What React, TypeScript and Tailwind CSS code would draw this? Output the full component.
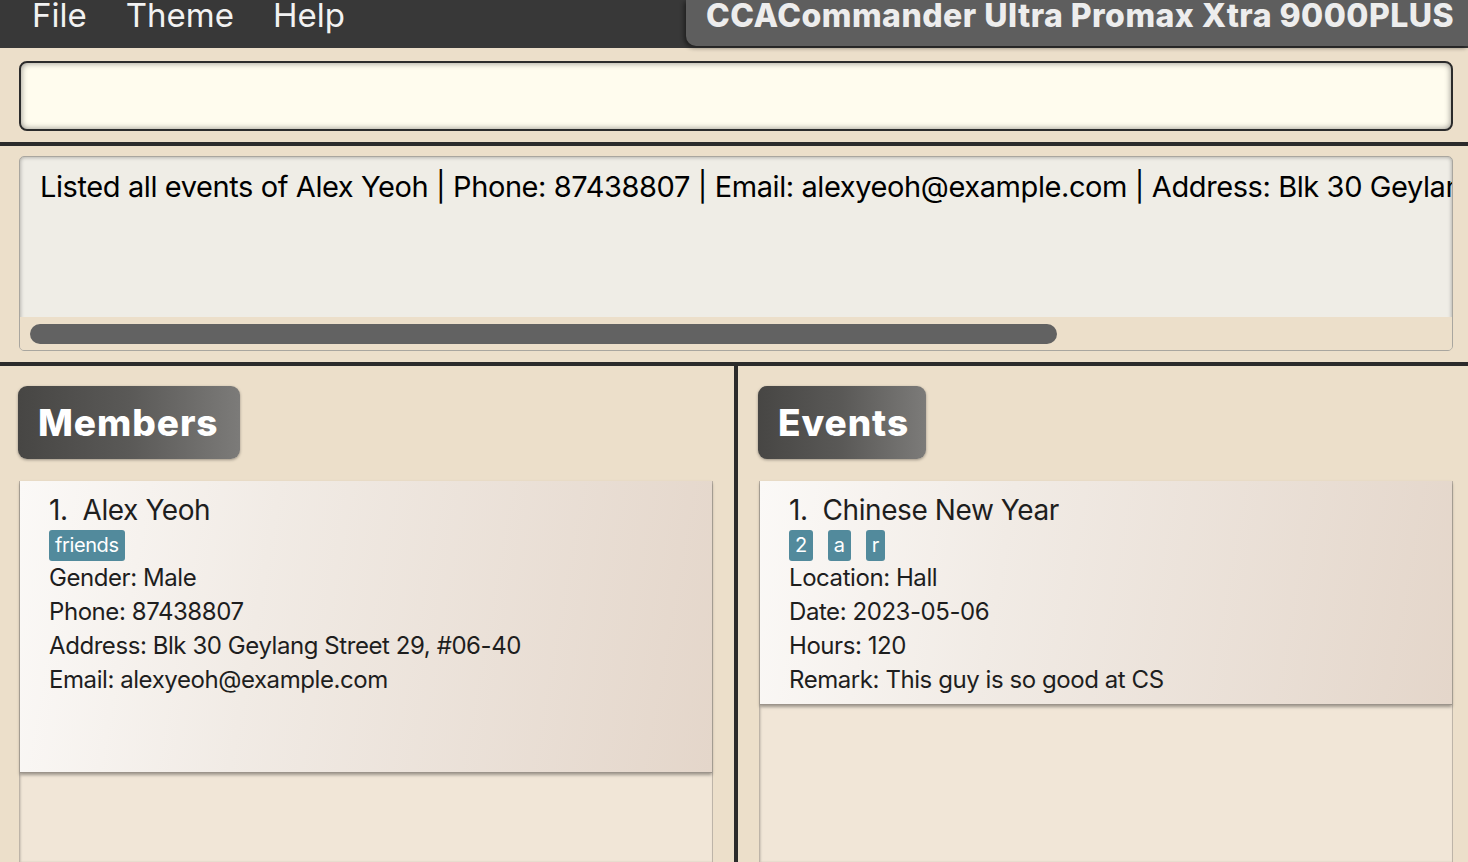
import React from "react";

const body = { fontFamily: "Inter, 'Noto Sans', sans-serif" };
const heavy = { fontFamily: "Inter, 'Open Sans', sans-serif" };

function Badge({ label, w }: { label: string; w: string }) {
  return (
    <div
      className={`h-[73px] ${w} rounded-[9px] bg-gradient-to-r from-[#474644] via-[#5a5957] to-[#7c7b79] shadow-[0_1px_3px_rgba(0,0,0,0.35)] flex items-center pl-[20px]`}
    >
      <span className="text-white text-[37px] font-extrabold tracking-[0.025em] leading-none" style={heavy}>
        {label}
      </span>
    </div>
  );
}

function Tag({ t }: { t: string }) {
  return (
    <span className="h-[31px] px-[6px] rounded-[3px] bg-[#528a9c] text-white text-[20px] leading-[31px] tracking-[-0.02em]">
      {t}
    </span>
  );
}

export default function App() {
  return (
    <div className="w-[1468px] h-[862px] overflow-hidden bg-[#ecdfca] flex flex-col" style={body}>
      {/* menu bar */}
      <div className="h-[48px] shrink-0 bg-[#383838] flex items-start">
        <div className="flex gap-[39px] pl-[32px] -mt-[9px] text-[33px] text-[#f2f2f2] font-normal leading-[48px]">
          <span>File</span>
          <span>Theme</span>
          <span>Help</span>
        </div>
        <div className="ml-auto w-[782px] h-[46px] bg-[#5e5e5e] rounded-bl-[10px] shadow-[-2px_2px_4px_rgba(0,0,0,0.45)] flex items-start pl-[20px]">
          <span className="-mt-[7px] text-[32px] font-extrabold text-[#ededed] leading-[46px] tracking-[0.015em]" style={heavy}>
            CCACommander Ultra Promax Xtra 9000PLUS
          </span>
        </div>
      </div>

      {/* command box */}
      <div className="h-[94px] shrink-0 pt-[13px] pl-[19px] pr-[15px]">
        <div className="h-[70px] rounded-[8px] border-2 border-[#2b2b2b] bg-[#fffcee] shadow-[inset_0_0_6px_rgba(0,0,0,0.45)]" />
      </div>
      <div className="h-[4px] shrink-0 bg-[#2b2b2b]" />

      {/* result display */}
      <div className="h-[216px] shrink-0 pt-[10px] pl-[19px] pr-[15px]">
        <div className="h-[195px] rounded-[5px] border border-[#a9a69f] bg-[#efede6] shadow-[inset_0_0_4px_rgba(0,0,0,0.35)] overflow-hidden flex flex-col">
          <div className="flex-1 pl-[20px] pt-[10px] overflow-hidden whitespace-nowrap text-[29px] text-black tracking-[-0.014em] leading-[40px]">
            Listed all events of Alex Yeoh | Phone: 87438807 | Email: alexyeoh@example.com | Address: Blk 30 Geylang Street 29, #06-40
          </div>
          <div className="h-[33px] bg-[#ecdfca] flex items-center pl-[10px]">
            <div className="h-[20px] w-[1027px] rounded-full bg-[#626262]" />
          </div>
        </div>
      </div>
      <div className="h-[4px] shrink-0 bg-[#2b2b2b]" />

      {/* lists */}
      <div className="flex-1 flex min-h-0">
        <div className="w-[734px] shrink-0 flex flex-col pt-[20px] pl-[18px] pr-[21px]">
          <Badge label="Members" w="w-[222px]" />
          <div className="mt-[22px] ml-[1px] flex-1 bg-[#f1e6d7] border-x border-[#bdb4a8] shadow-[inset_1px_0_2px_rgba(0,0,0,0.15)]">
            <div className="h-[292px] bg-[linear-gradient(100deg,#fbf9f7_0%,#f1ebe5_35%,#e4d6ca_100%)] shadow-[0_2px_3px_rgba(0,0,0,0.35)] border-b border-[#9c948b] pl-[29px] pt-[9px]">
              <div className="text-[28px] text-[#1e1e1e] leading-[40px] tracking-[-0.015em]">
                1.&nbsp; Alex Yeoh
              </div>
              <div className="flex gap-[15px]">
                <Tag t="friends" />
              </div>
              <div className="text-[24px] text-[#1e1e1e] leading-[34px] tracking-[-0.018em]">
                <div>Gender: Male</div>
                <div>Phone: 87438807</div>
                <div>Address: Blk 30 Geylang Street 29, #06-40</div>
                <div>Email: alexyeoh@example.com</div>
              </div>
            </div>
          </div>
        </div>
        <div className="w-[4px] shrink-0 bg-[#2b2b2b]" />
        <div className="flex-1 flex flex-col pt-[20px] pl-[20px] pr-[15px]">
          <Badge label="Events" w="w-[168px]" />
          <div className="mt-[22px] ml-[1px] flex-1 bg-[#f1e6d7] border-x border-[#bdb4a8] shadow-[inset_1px_0_2px_rgba(0,0,0,0.15)]">
            <div className="h-[224px] bg-[linear-gradient(100deg,#fbf9f7_0%,#f1ebe5_35%,#e4d6ca_100%)] shadow-[0_2px_3px_rgba(0,0,0,0.35)] border-b border-[#9c948b] pl-[29px] pt-[9px]">
              <div className="text-[28px] text-[#1e1e1e] leading-[40px] tracking-[-0.015em]">
                1.&nbsp; Chinese New Year
              </div>
              <div className="flex gap-[15px]">
                <Tag t="2" />
                <Tag t="a" />
                <Tag t="r" />
              </div>
              <div className="text-[24px] text-[#1e1e1e] leading-[34px] tracking-[-0.018em]">
                <div>Location: Hall</div>
                <div>Date: 2023-05-06</div>
                <div>Hours: 120</div>
                <div>Remark: This guy is so good at CS</div>
              </div>
            </div>
          </div>
        </div>
      </div>
    </div>
  );
}
